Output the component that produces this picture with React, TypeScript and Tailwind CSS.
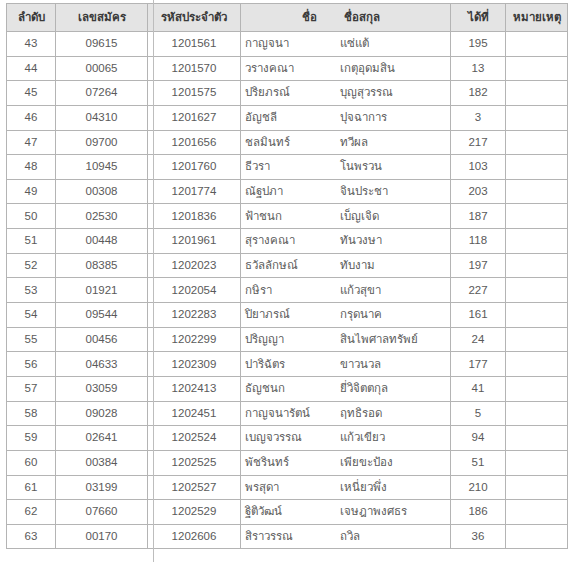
import React from 'react';

const rows: [string, string, string, string, string, string][] = [
  ['43', '09615', '1201561', 'กาญจนา', 'แซ่แต้', '195'],
  ['44', '00065', '1201570', 'วรางคณา', 'เกตุอุดมสิน', '13'],
  ['45', '07264', '1201575', 'ปริยภรณ์', 'บุญสุวรรณ', '182'],
  ['46', '04310', '1201627', 'อัญชลี', 'ปุจฉาการ', '3'],
  ['47', '09700', '1201656', 'ชลมินทร์', 'ทวีผล', '217'],
  ['48', '10945', '1201760', 'ธีวรา', 'โนพรวน', '103'],
  ['49', '00308', '1201774', 'ณัฐปภา', 'จินประชา', '203'],
  ['50', '02530', '1201836', 'ฟ้าชนก', 'เบ็ญเจิด', '187'],
  ['51', '00448', '1201961', 'สุรางคณา', 'ทันวงษา', '118'],
  ['52', '08385', '1202023', 'ธวัลลักษณ์', 'ทับงาม', '197'],
  ['53', '01921', '1202054', 'กษิรา', 'แก้วสุขา', '227'],
  ['54', '09544', '1202283', 'ปิยาภรณ์', 'กรุดนาค', '161'],
  ['55', '00456', '1202299', 'ปริญญา', 'สินไพศาลทรัพย์', '24'],
  ['56', '04633', '1202309', 'ปาริฉัตร', 'ขาวนวล', '177'],
  ['57', '03059', '1202413', 'ธัญชนก', 'ยี่วิจิตตกุล', '41'],
  ['58', '09028', '1202451', 'กาญจนารัตน์', 'ฤทธิรอด', '5'],
  ['59', '02641', '1202524', 'เบญจวรรณ', 'แก้วเขียว', '94'],
  ['60', '00384', '1202525', 'พัชรินทร์', 'เพียขะป้อง', '51'],
  ['61', '03199', '1202527', 'พรสุดา', 'เหนี่ยวพึ่ง', '210'],
  ['62', '07660', '1202529', 'ฐิติวัฒน์', 'เจษฎาพงศธร', '186'],
  ['63', '00170', '1202606', 'สิราวรรณ', 'ถวิล', '36'],
];

const cell = 'border border-[#b4b4b4] p-0';

export default function App() {
  return (
    <div
      className="relative w-[580px] h-[562px] overflow-hidden bg-white pt-[3px] pl-[6px] text-[11.5px] text-[#5a5a5a]"
      style={{ fontFamily: '"Liberation Sans", "Noto Sans", sans-serif' }}
    >
      <table className="border-collapse table-fixed w-[561px]">
        <colgroup>
          <col className="w-[49px]" />
          <col className="w-[92px]" />
          <col className="w-[93px]" />
          <col className="w-[95px]" />
          <col className="w-[115px]" />
          <col className="w-[55px]" />
          <col className="w-[62px]" />
        </colgroup>
        <thead>
          <tr className="h-[28px] bg-[#e4e4e4] text-[#3a3a3a] font-bold">
            <th className={`${cell} text-center`}>ลำดับ</th>
            <th className={`${cell} text-center`}>เลขสมัคร</th>
            <th className={`${cell} text-center`}>รหัสประจำตัว</th>
            <th className={`${cell} border-r-0 text-right pr-[19px]`}>ชื่อ</th>
            <th className={`${cell} border-l-0 text-left pl-[8px]`}>ชื่อสกุล</th>
            <th className={`${cell} text-center`}>ได้ที่</th>
            <th className={`${cell} text-center`}>หมายเหตุ</th>
          </tr>
        </thead>
        <tbody>
          {rows.map((r) => (
            <tr key={r[0]} className="h-[24.65px]">
              <td className={`${cell} text-center`}>{r[0]}</td>
              <td className={`${cell} text-center`}>{r[1]}</td>
              <td className={`${cell} text-center`}>{r[2]}</td>
              <td className={`${cell} border-r-0 pl-[4px] whitespace-nowrap`}>{r[3]}</td>
              <td className={`${cell} border-l-0 pl-[4px] whitespace-nowrap`}>{r[4]}</td>
              <td className={`${cell} text-center`}>{r[5]}</td>
              <td className={cell}></td>
            </tr>
          ))}
        </tbody>
      </table>
      {/* scan fold line */}
      <div className="absolute left-[153px] top-0 h-full w-px bg-[#bdbdbd]" />
    </div>
  );
}
